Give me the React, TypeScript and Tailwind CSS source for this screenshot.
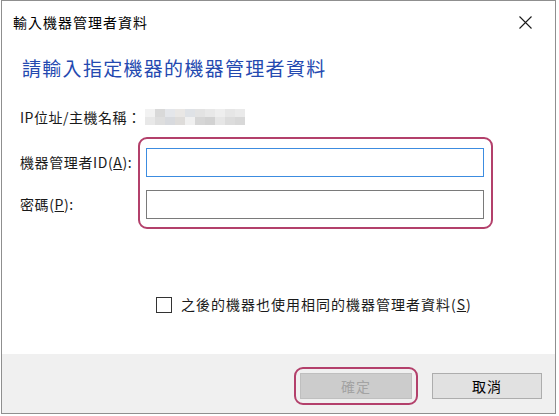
import React from 'react';

const font = { fontFamily: '"Noto Sans CJK TC", "Noto Sans", sans-serif' };

const blurShades = [
  ['#f2f2f2', '#d9d9d9', '#e4e6ea', '#e9e7e5', '#dfe2e6', '#e3e3e3', '#e8e8e8', '#eeeeee', '#e6e6e6', '#eaeaea'],
  ['#e8e8e8', '#dedede', '#d8dade', '#dedcda', '#f0f0f0', '#d6d6d6', '#d2d2d2', '#e6e6e6', '#dcdcdc', '#d8d8d8'],
];

function BlurredHost() {
  return (
    <div className="flex flex-col">
      {blurShades.map((row, i) => (
        <div key={i} className="flex">
          {row.map((c, j) => (
            <div key={j} className="w-[10px] h-[8px]" style={{ backgroundColor: c }} />
          ))}
        </div>
      ))}
    </div>
  );
}

function CloseIcon() {
  return (
    <svg width="13" height="13" viewBox="0 0 13 13" className="text-[#1a1a1a]">
      <path d="M0.5 0.5 L12.5 12.5 M12.5 0.5 L0.5 12.5" stroke="currentColor" strokeWidth="1.1" fill="none" />
    </svg>
  );
}

export default function App() {
  return (
    <div className="w-[559px] h-[416px] bg-white overflow-hidden" style={font}>
      <div className="ml-px w-[555px] h-[414px] border border-[#8f8f8f] flex flex-col bg-white">
        {/* Title bar */}
        <div className="h-[43px] flex items-center justify-between pl-[11px] pr-[23px]">
          <span className="text-[14px] tracking-[1px] text-black">輸入機器管理者資料</span>
          <CloseIcon />
        </div>

        {/* Heading */}
        <div className="h-[48px] flex items-center pl-[20px]">
          <span className="text-[19px] tracking-[1.3px] text-[#2449b0]">請輸入指定機器的機器管理者資料</span>
        </div>

        {/* Host line */}
        <div className="mt-[15px] h-[20px] flex items-center pl-[18px]">
          <span className="text-[14px] tracking-[0.5px] text-[#1a1a1a] w-[125px]">IP位址/主機名稱：</span>
          <BlurredHost />
        </div>

        {/* Credentials */}
        <div className="relative mt-[10px] pt-[11px] h-[92px]">
          <div className="h-[29px] flex items-center pl-[18px]">
            <span className="w-[126px] text-[14px] tracking-[0.6px] text-[#1a1a1a]">
              機器管理者ID(<span className="underline">A</span>):
            </span>
            <div className="w-[338px] h-[29px] border border-[#3c8ce0] bg-white" />
          </div>
          <div className="mt-[13px] h-[29px] flex items-center pl-[18px]">
            <span className="w-[126px] text-[14px] tracking-[0.6px] text-[#1a1a1a]">
              密碼(<span className="underline">P</span>):
            </span>
            <div className="w-[338px] h-[29px] border border-[#7a7a7a] bg-white" />
          </div>
          <div className="absolute left-[136px] top-0 w-[355px] h-[92px] rounded-[9px] border-2 border-[#b3406b] pointer-events-none" />
        </div>

        {/* Remember checkbox */}
        <div className="mt-[67px] h-[17px] flex items-center pl-[154px]">
          <div className="w-[16px] h-[16px] border-[1.5px] border-[#333333] bg-white" />
          <span className="ml-[9px] text-[14px] tracking-[1px] text-[#1a1a1a]">
            之後的機器也使用相同的機器管理者資料(<span className="underline">S</span>)
          </span>
        </div>

        {/* Footer */}
        <div className="mt-auto h-[59px] bg-[#f0f0f0] flex items-start justify-end pt-[19px] pr-[13px] gap-[20px]">
          <div className="relative">
            <div className="w-[112px] h-[26px] bg-[#cccccc] border border-[#bfbfbf] flex items-center justify-center text-[14px] tracking-[1px] text-[#a3a3a3]">
              確定
            </div>
            <div className="absolute left-[-6px] top-[-6px] w-[124px] h-[38px] rounded-[9px] border-2 border-[#b3406b] pointer-events-none" />
          </div>
          <div className="w-[110px] h-[26px] bg-[#e1e1e1] border border-[#adadad] flex items-center justify-center text-[14px] tracking-[1px] text-black">
            取消
          </div>
        </div>
      </div>
    </div>
  );
}
